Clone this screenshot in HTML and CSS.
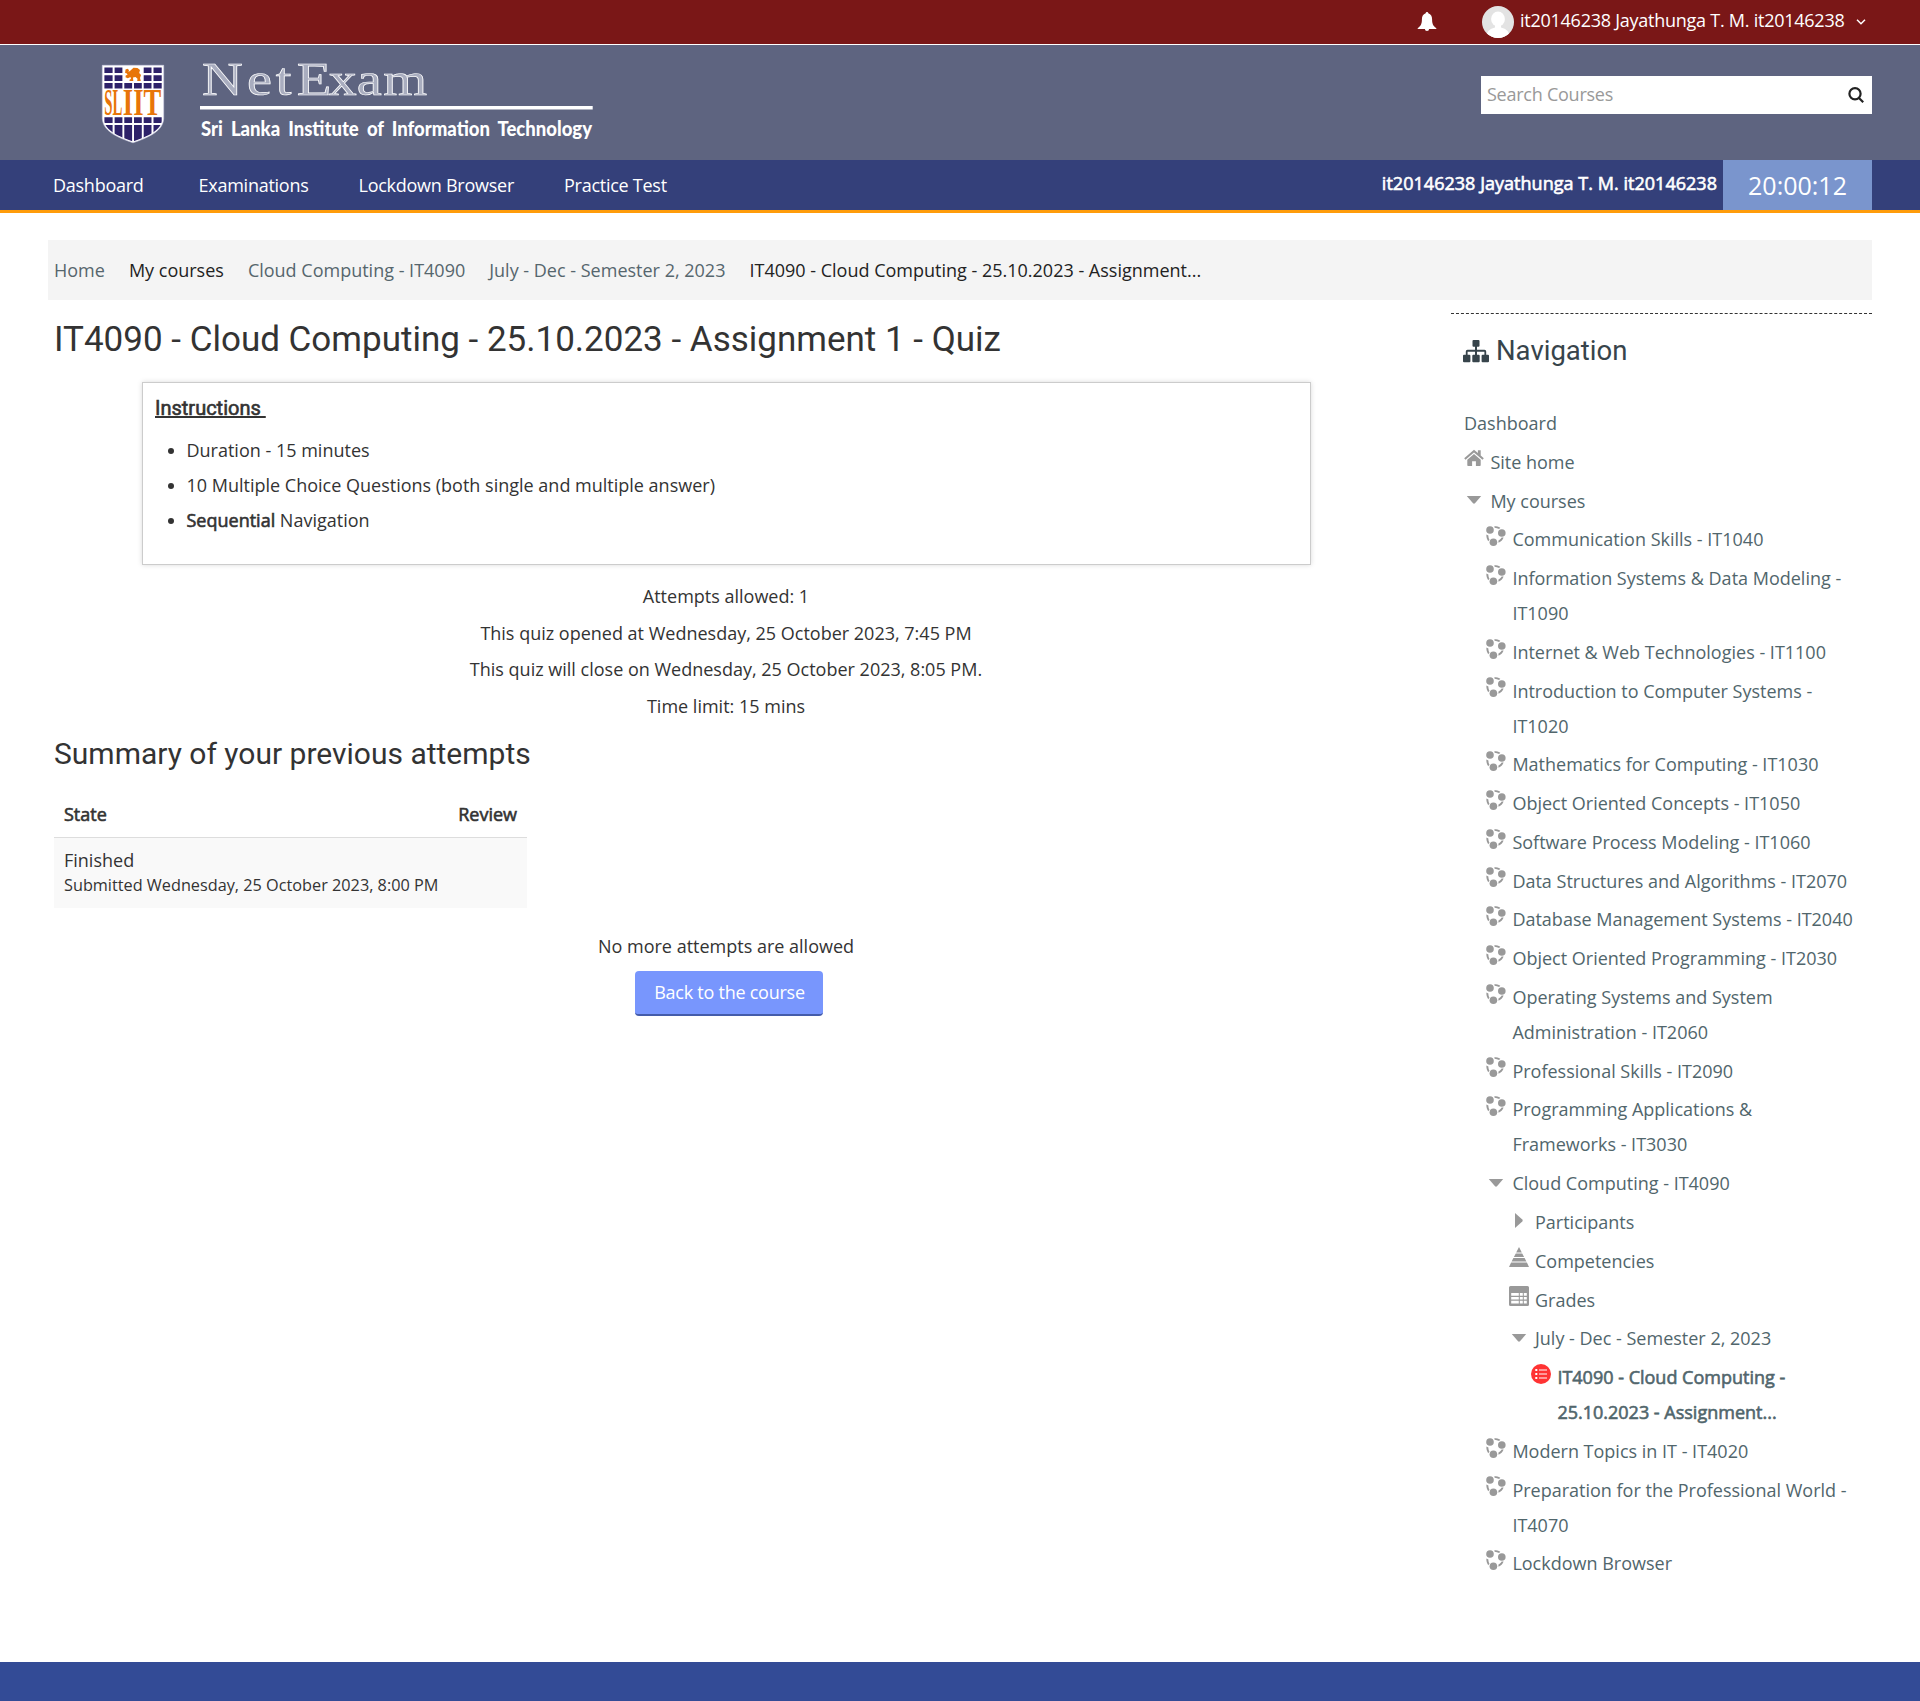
FILE: index.html
```html
<!DOCTYPE html>
<html lang="en">
<head>
<meta charset="utf-8">
<title>IT4090 - Cloud Computing - 25.10.2023 - Assignment 1 - Quiz</title>
<link rel="stylesheet" href="styles.css">
</head>
<body>
<svg class="defs" width="0" height="0" aria-hidden="true">
  <symbol id="course" viewBox="0 0 20 20"><circle cx="4" cy="4" r="3.8"/><circle cx="15.8" cy="7" r="3.8"/><circle cx="7.4" cy="16.2" r="3.8"/><path d="M8.3.2c2.200 0 4.200.4 6 1.500l-1.200 1.300C11.600 2.200 10.200 1.800 8.600 1.700zM.4 8.600l2 .8c0 1.600.3 3 1.100 4.300l-1.300 1.500C.8 13.200.2 11 .4 8.600zM17.600 11.600c-.9 2.400-2.700 4.300-5 5.200l-.3-2c1.500-.8 2.600-1.800 3.300-3.200z"/></symbol>
  <symbol id="home" viewBox="0 0 20 20"><path d="M10 1.800.2 10.200l1.300 1.500L10 4.600l8.500 7.100 1.300-1.500-3.100-2.600V2.200h-2.800v2.900zM10 6.100 3.300 11.800v5.400c0 .5.300.8.800.8h4v-4.700h3.800V18h4c.5 0 .8-.3.800-.8v-5.400z"/></symbol>
  <symbol id="down" viewBox="0 0 20 20"><path d="M2.800 9h14.400L11 16.200q-1 .9-2 0z"/></symbol>
  <symbol id="right" viewBox="0 0 20 20"><path d="M6 4v15l7.300-6.500q.9-1 0-2z"/></symbol>
  <symbol id="pyramid" viewBox="0 0 20 20"><path d="M10 0 12.800 5.500H7.200zM6.800 6.400h6.400l1.900 3.700H4.900zM4.400 11h11.200l1.800 3.600H2.600zM2.100 15.500h15.800L20 20H0z"/></symbol>
  <symbol id="grades" viewBox="0 0 20 20"><path fill-rule="evenodd" d="M1.500 0h17Q20 0 20 1.500v17q0 1.500-1.500 1.500h-17Q0 20 0 18.500v-17Q0 0 1.500 0zM2.200 7v2.700h7.600V7zM10.800 7v2.700h3V7zM14.800 7v2.700h3V7zM2.200 10.900v2.700h7.600v-2.700zM10.800 10.900v2.700h3v-2.700zM14.800 10.900v2.700h3v-2.700zM2.200 14.800v2.700h7.600v-2.700zM10.800 14.800v2.700h3v-2.700zM14.800 14.800v2.700h3v-2.700z"/></symbol>
</svg>

<header>
  <div class="topbar">
    <svg class="bell" width="20" height="20" viewBox="0 0 20 20"><path d="M8.700 1.300a1.300 1.300 0 0 1 2.600 0C14 2.200 15.100 4.500 15.100 7.500c0 4 .9 6.200 4 8.600.6.500.4.900-.2.900h-6.800a2.100 2.100 0 0 1-4.200 0H1.100c-.6 0-.8-.4-.2-.9 3.100-2.400 4-4.600 4-8.600 0-3 1.100-5.300 3.800-6.200z"/></svg>
    <svg class="avatar" width="32" height="32" viewBox="0 0 32 32"><clipPath id="av"><circle cx="16" cy="16" r="16"/></clipPath><g clip-path="url(#av)"><path fill="#e3e3e3" d="M0 0h32v32H0z"/><ellipse cx="16" cy="13" rx="6.900" ry="7.500" fill="#fff"/><path fill="#fff" d="M13 18h6v3.500c4 1 7.500 3 8 7L26 32H6l-1-3.500c.5-4 4-6 8-7z"/></g></svg>
    <span class="user">it20146238 Jayathunga T. M. it20146238</span>
    <svg class="chev" width="10" height="8" viewBox="0 0 10 8"><path d="m1 1.700 4 4 4-4"/></svg>
  </div>
  <div class="banner">
    <svg class="logo" width="500" height="100" viewBox="100 50 500 100">
      <clipPath id="sh"><path d="M103.500 66.500h59v52c-1 12-15 18-29.500 23-14.500-5-28.500-11-29.500-23z"/></clipPath>
      <path fill="#fff" stroke="#cfcfe6" stroke-width=".6" d="M102.300 65.300h61.400v53c-.5 13-15 19-30.700 24.500-15.700-5.500-30.200-11.500-30.700-24.500z"/>
      <g clip-path="url(#sh)" fill="#2d2169">
        <path d="M104.400 67.500h8.200v5.500h-8.200zM114.600 67.500h7.800v5.500h-7.800zM143.700 67.500h7.800v5.500h-7.800zM153.500 67.500h8.200v5.500h-8.200zM104.400 75.200h8.200v5.800h-8.200zM114.600 75.200h7.800v5.800h-7.800zM143.700 75.200h7.800v5.800h-7.800zM153.500 75.200h8.200v5.800h-8.200z"/>
        <path d="M104.400 83h8.200v5.500h-8.200zM114.600 83h7.800v5.500h-7.800zM124.300 83h7.800v5.500h-7.800zM134 83h7.800v5.500h-7.800zM143.700 83h7.800v5.500h-7.800zM153.500 83h8.200v5.500h-8.200z"/>
        <path d="M104.400 117.300h8.200v5.700h-8.200zM114.600 117.300h7.800v5.700h-7.800zM124.300 117.300h7.800v5.700h-7.800zM134 117.300h7.800v5.700h-7.800zM143.700 117.300h7.800v5.700h-7.800zM153.500 117.300h8.200v5.700h-8.200z"/>
        <path d="M104.400 125h8.200v18h-8.200zM114.600 125h7.800v18h-7.800zM124.300 125h7.800v18h-7.800zM134 125h7.800v18h-7.800zM143.700 125h7.800v18h-7.800zM153.500 125h8.200v18h-8.200z"/>
      </g>
      <path fill="#e87508" d="M125.500 69.500l2-.8 1.500 1.300-.5 2 2-1.500 3-2.700 4 .3 2.500 2-.8 3 1.800 2-1 2.800.8 3h-3.600l.3-2.200-2-1.800-2.500.5.300 3.500h-3.800l.2-1.400 1.300-.5-.5-2-2.700 1.200-2.300-1 .3-2 1.800-.2-1-1.700-1.500-.3z"/>
      <g class="shield-text"><text transform="translate(104.300 114.600) scale(.4 1)">SL</text><text transform="translate(122.800 114.600) scale(.72 1)">IIT</text></g>
      <text class="inline-title" transform="translate(202 94.500) scale(1.200 1)" x="0 37.500 61.500 79 105.500 129 151" y="0">NetExam</text>
      <path fill="#fff" d="M200 106h392.700v3.500H200z"/>
      <text class="logo-sub" x="201" y="136" textLength="391" lengthAdjust="spacingAndGlyphs">Sri Lanka Institute of Information Technology</text>
    </svg>
    <div class="search"><span>Search Courses</span>
      <svg width="16" height="16" viewBox="0 0 16 16"><circle cx="7" cy="6.800" r="5.600"/><path d="m11 11 4.200 4.200"/></svg>
    </div>
  </div>
  <nav class="menu">
    <a class="first">Dashboard</a><a>Examinations</a><a>Lockdown Browser</a><a>Practice Test</a>
    <b>it20146238 Jayathunga T. M. it20146238</b>
    <div class="clock">20:00:12</div>
  </nav>
</header>

<div class="crumbs"><a>Home</a><span>My courses</span><a>Cloud Computing - IT4090</a><a>July - Dec - Semester 2, 2023</a><span>IT4090 - Cloud Computing - 25.10.2023 - Assignment...</span></div>

<div class="page">
  <main>
    <h2>IT4090 - Cloud Computing - 25.10.2023 - Assignment 1 - Quiz</h2>
    <section class="intro">
      <h5><u>Instructions&nbsp;</u></h5>
      <ul><li>Duration - 15 minutes</li><li>10 Multiple Choice Questions (both single and multiple answer)</li><li><b>Sequential</b> Navigation</li></ul>
    </section>
    <div class="info"><p>Attempts allowed: 1</p><p>This quiz opened at Wednesday, 25 October 2023, 7:45 PM</p><p>This quiz will close on Wednesday, 25 October 2023, 8:05 PM.</p><p>Time limit: 15 mins</p></div>
    <h3>Summary of your previous attempts</h3>
    <table>
      <thead><tr><th>State</th><th class="rev">Review</th></tr></thead>
      <tbody><tr><td colspan="2">Finished<small>Submitted Wednesday, 25 October 2023, 8:00 PM</small></td></tr></tbody>
    </table>
    <p class="nomore">No more attempts are allowed</p>
    <button>Back to the course</button>
  </main>
  <aside>
    <h4><svg width="26" height="23" viewBox="0 0 26 23"><path d="M10.500 0h5q1 0 1 1v4.800q0 1-1 1H14v3h7.500q1.700 0 1.700 1.700v3.300H25q1 0 1 1v5.400q0 1-1 1h-5.400q-1 0-1-1v-5.400q0-1 1-1h1.800v-3H14v3h1.700q1 0 1 1v5.400q0 1-1 1h-5.400q-1 0-1-1v-5.400q0-1 1-1H12v-3H4.600v3h1.800q1 0 1 1v5.400q0 1-1 1H1q-1 0-1-1v-5.400q0-1 1-1h1.800v-3.300q0-1.700 1.700-1.700H12v-3h-1.500q-1 0-1-1V1q0-1 1-1z"/></svg>Navigation</h4>
    <ul class="tree">
      <li class="l0"><span>Dashboard</span></li>
      <li class="l1"><svg><use href="#home"/></svg><span>Site home</span></li>
      <li class="l1"><svg><use href="#down"/></svg><span>My courses</span></li>
      <li class="l2"><svg><use href="#course"/></svg><span>Communication Skills - IT1040</span></li>
      <li class="l2"><svg><use href="#course"/></svg><span>Information Systems &amp; Data Modeling -<br>IT1090</span></li>
      <li class="l2"><svg><use href="#course"/></svg><span>Internet &amp; Web Technologies - IT1100</span></li>
      <li class="l2"><svg><use href="#course"/></svg><span>Introduction to Computer Systems -<br>IT1020</span></li>
      <li class="l2"><svg><use href="#course"/></svg><span>Mathematics for Computing - IT1030</span></li>
      <li class="l2"><svg><use href="#course"/></svg><span>Object Oriented Concepts - IT1050</span></li>
      <li class="l2"><svg><use href="#course"/></svg><span>Software Process Modeling - IT1060</span></li>
      <li class="l2"><svg><use href="#course"/></svg><span>Data Structures and Algorithms - IT2070</span></li>
      <li class="l2"><svg><use href="#course"/></svg><span>Database Management Systems - IT2040</span></li>
      <li class="l2"><svg><use href="#course"/></svg><span>Object Oriented Programming - IT2030</span></li>
      <li class="l2"><svg><use href="#course"/></svg><span>Operating Systems and System<br>Administration - IT2060</span></li>
      <li class="l2"><svg><use href="#course"/></svg><span>Professional Skills - IT2090</span></li>
      <li class="l2"><svg><use href="#course"/></svg><span>Programming Applications &amp;<br>Frameworks - IT3030</span></li>
      <li class="l2"><svg><use href="#down"/></svg><span>Cloud Computing - IT4090</span></li>
      <li class="l3"><svg><use href="#right"/></svg><span>Participants</span></li>
      <li class="l3"><svg><use href="#pyramid"/></svg><span>Competencies</span></li>
      <li class="l3"><svg><use href="#grades"/></svg><span>Grades</span></li>
      <li class="l3"><svg><use href="#down"/></svg><span>July - Dec - Semester 2, 2023</span></li>
      <li class="l4"><svg viewBox="0 0 20 20"><circle cx="10" cy="10" r="10" fill="#f33"/><g fill="none" stroke="#fff" stroke-width="1"><path d="M8 6h8M8 10h8M8 14h8"/><path d="M4.300 6h2M4.300 10h2M4.300 14h2" stroke-width="1.800"/></g></svg><b>IT4090 - Cloud Computing -<br>25.10.2023 - Assignment...</b></li>
      <li class="l2"><svg><use href="#course"/></svg><span>Modern Topics in IT - IT4020</span></li>
      <li class="l2"><svg><use href="#course"/></svg><span>Preparation for the Professional World -<br>IT4070</span></li>
      <li class="l2"><svg><use href="#course"/></svg><span>Lockdown Browser</span></li>
    </ul>
  </aside>
</div>
<footer></footer>
</body>
</html>
```
FILE: styles.css
```css
* { box-sizing: border-box; }
body { margin: 0; height: 1701px; display: flex; flex-direction: column; background: #fff; color: #333; font: 18px/35px "Open Sans", sans-serif; }
.defs { position: absolute; }
h2, h3, h4, h5, p, ul { margin: 0; padding: 0; font-weight: 400; }
b, th { font-weight: 400; -webkit-text-stroke: .6px currentColor; }

.topbar { height: 45px; padding-right: 54.500px; display: flex; justify-content: flex-end; background: #7a1717; border-bottom: 1px solid #fff; color: #fff; }
.bell { margin: 11.500px 45px 0 0; fill: #fff; }
.avatar { margin: 6px 6px 0 0; }
.user { line-height: 41px; letter-spacing: -.25px; }
.chev { margin: 18px 0 0 11px; fill: none; stroke: #fff; stroke-width: 1.500; }

.banner { height: 115px; padding: 5px 48px 0 100px; display: flex; justify-content: space-between; background: #5e6480; }
.logo { overflow: visible; }
.shield-text { font: bold 37px "Liberation Serif", serif; fill: #e87508; }
.inline-title { font: 47px "Liberation Serif", serif; fill: #a9adbf; stroke: #fff; stroke-width: .7; }
.logo-sub { font: 900 20px Lato, sans-serif; word-spacing: 4px; fill: #fff; }
.search { width: 391px; height: 38px; margin-top: 26px; padding: 0 8px 0 6px; display: flex; align-items: center; justify-content: space-between; background: #fff; color: #999; letter-spacing: -.25px; }
.search span { margin-top: -2px; }
.search svg { margin-top: -1px; fill: none; stroke: #222; stroke-width: 2.200; }

.menu { height: 53px; padding: 0 48px 0 53px; display: flex; background: #34407a; border-bottom: 3px solid #ff9c0a; color: #fff; line-height: 50px; letter-spacing: -.26px; }
.menu a { margin-right: 50px; }
.menu .first { margin-right: 55px; }
.menu b { margin-left: auto; line-height: 47px; letter-spacing: .03px; }
.clock { width: 149px; margin-left: 6px; background: #7a95cd; text-align: center; font-size: 25px; letter-spacing: 0; }

.crumbs { height: 60px; margin: 27px 48px 0; padding: 0 6px; display: flex; gap: 24px; background: #f4f4f4; line-height: 60px; color: #222; flex: none; }
.crumbs a { color: #56666d; }

.page { display: flex; justify-content: space-between; padding: 0 48px 0 54px; flex: 1; min-height: 0; }
main { width: 1344px; }
h2 { font: 35px/42px Roboto, sans-serif; margin-top: 19px; }
.intro { width: 1169px; height: 183px; margin: 21px auto 0 88px; padding: 8px 12px; border: 1px solid #ccc; box-shadow: 0 0 5px rgba(0,0,0,.15); }
h5 { font: 20px/35px Roboto, sans-serif; -webkit-text-stroke: .6px currentColor; }
.intro ul { margin-top: 7px; padding-left: 31.500px; }
.info { padding-top: 13px; text-align: center; }
.info p { line-height: 36.600px; }
h3 { font: 30px/40px Roboto, sans-serif; margin-top: 10px; }
table { width: 473px; margin-top: 17px; border-collapse: collapse; line-height: 25px; }
th, td { padding: 10px; text-align: left; }
th { height: 46px; border-bottom: 1px solid #ddd; }
th.rev { text-align: right; }
td { height: 70px; background: #f9f9f9; }
small { display: block; font-size: 16.250px; white-space: nowrap; }
.nomore { margin-top: 21px; text-align: center; }
button { display: block; width: 188px; height: 45px; margin: 7px 0 0 581px; padding: 0 0 0 1px; border: 0; border-bottom: 2px solid #445caa; border-radius: 4px; background: #7896fd; color: #fff; font: inherit; letter-spacing: -.25px; }

aside { width: 421px; margin-top: 13px; padding-left: 12px; border-top: 1px dashed #333; color: #51666c; }
h4 { display: flex; align-items: center; gap: 7px; margin-top: 17px; font: 27.500px/40px Roboto, sans-serif; color: #37444b; }
h4 svg { fill: currentColor; }
.tree { margin-top: 35px; padding-left: 1px; list-style: none; }
.tree li { display: flex; margin-bottom: 3.770px; }
.tree svg { width: 20px; height: 20px; margin: 3.700px 6.400px 0 0; fill: #999; flex: none; }
.l2 { padding-left: 22px; }
.l3 { padding-left: 44.600px; }
.l4 { padding-left: 67px; }
footer { height: 39px; background: #334b96; flex: none; }
```
